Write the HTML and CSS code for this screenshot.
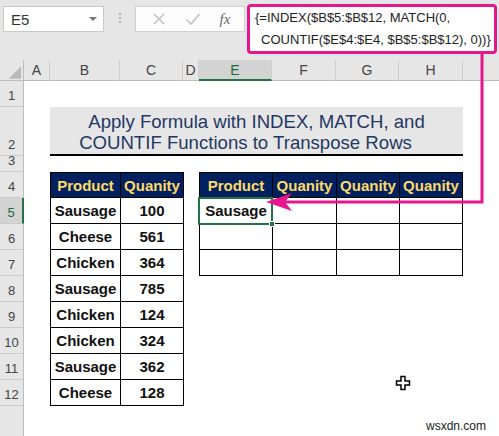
FILE: index.html
```html
<!DOCTYPE html>
<html>
<head>
<meta charset="utf-8">
<link rel="stylesheet" href="styles.css">
</head>
<body>
<div class="app">
  <div class="toolbar">
    <div class="namebox"><span>E5</span><span class="caret"></span></div>
    <div class="grip"><i></i><i></i><i></i></div>
    <div class="fxbox">
      <svg width="14" height="14" viewBox="0 0 14 14"><path d="M2 2 L12 12 M12 2 L2 12" stroke="#c4c4c4" stroke-width="1.6" fill="none"/></svg>
      <svg width="16" height="14" viewBox="0 0 16 14"><path d="M1.5 7.5 L6 12 L14.5 2" stroke="#c4c4c4" stroke-width="1.6" fill="none"/></svg>
      <span class="fx">fx</span>
    </div>
    <div class="formula">
      <div>{=INDEX($B$5:$B$12, MATCH(0,</div>
      <div class="l2">COUNTIF($E$4:$E4, $B$5:$B$12), 0))}</div>
    </div>
  </div>

  <div class="sheet">
    <div class="ch corner"><svg width="24" height="21" viewBox="0 0 24 21"><polygon points="22,6 22,19 9,19" fill="#b9b9b9"/></svg></div>
    <div class="ch">A</div>
    <div class="ch">B</div>
    <div class="ch">C</div>
    <div class="ch">D</div>
    <div class="ch on">E</div>
    <div class="ch">F</div>
    <div class="ch">G</div>
    <div class="ch">H</div>
    <div class="ch last"></div>

    <div class="rh">1</div>
    <div class="rh">2</div>
    <div class="rh">3</div>
    <div class="rh">4</div>
    <div class="rh on">5</div>
    <div class="rh">6</div>
    <div class="rh">7</div>
    <div class="rh">8</div>
    <div class="rh">9</div>
    <div class="rh">10</div>
    <div class="rh">11</div>
    <div class="rh">12</div>
    <div class="rh rest"></div>

    <div class="title"><span class="ln">Apply Formula with INDEX, MATCH, and</span><span class="ln ln2">COUNTIF Functions to Transpose Rows</span></div>

    <div class="tbl t1">
      <div class="c hd">Product</div><div class="c hd">Quanity</div>
      <div class="c">Sausage</div><div class="c">100</div>
      <div class="c">Cheese</div><div class="c">561</div>
      <div class="c">Chicken</div><div class="c">364</div>
      <div class="c">Sausage</div><div class="c">785</div>
      <div class="c">Chicken</div><div class="c">124</div>
      <div class="c">Chicken</div><div class="c">324</div>
      <div class="c">Sausage</div><div class="c">362</div>
      <div class="c">Cheese</div><div class="c">128</div>
    </div>

    <div class="tbl t2">
      <div class="c hd">Product</div><div class="c hd">Quanity</div><div class="c hd">Quanity</div><div class="c hd">Quanity</div>
      <div class="c">Sausage</div><div class="c"></div><div class="c"></div><div class="c"></div>
      <div class="c"></div><div class="c"></div><div class="c"></div><div class="c"></div>
      <div class="c"></div><div class="c"></div><div class="c"></div><div class="c"></div>
    </div>

    <div class="sel"><span class="handle"></span></div>
  </div>

  <svg class="arrow" width="499" height="436" viewBox="0 0 499 436">
    <path d="M482 53 V202 H284" stroke="#e8168c" stroke-width="3" fill="none"/>
    <polygon points="266,202 292,193 285,202 292,211" fill="#e8168c"/>
  </svg>

  <svg class="cursor" width="17" height="17" viewBox="0 0 17 17">
    <path d="M6 1.5 H10 V6 H14.5 V10 H10 V14.5 H6 V10 H1.5 V6 H6 Z" fill="#fff" stroke="#000" stroke-width="1.5"/>
  </svg>

  <div class="wm">wsxdn.com</div>
</div>
</body>
</html>
```

FILE: styles.css
```css
* { box-sizing: border-box; margin: 0; padding: 0; }
html, body { margin: 0; background: #fff; }
body { font-family: "Liberation Sans", Arial, sans-serif; width: 499px; height: 436px; overflow: hidden; }

.app { position: relative; width: 499px; height: 436px; }

.toolbar { height: 60px; background: #e6e6e6; display: flex; align-items: flex-start; padding-left: 3px; }
.namebox { margin-top: 6px; width: 101px; height: 26px; background: #fff; border: 1px solid #c9c9c9; display: flex; align-items: center; justify-content: space-between; padding: 0 6px 0 7px; font-size: 15px; color: #333; }
.caret { width: 0; height: 0; border-left: 4px solid transparent; border-right: 4px solid transparent; border-top: 4px solid #777; }
.grip { margin-top: 13px; width: 31px; display: flex; flex-direction: column; align-items: center; gap: 2px; }
.grip i { display: block; width: 2px; height: 2px; background: #b3b3b3; }
.fxbox { margin-top: 6px; width: 110px; height: 26px; background: #fdfdfd; border: 1px solid #d0d0d0; display: flex; align-items: center; justify-content: space-around; padding: 0 4px 0 6px; }
.fx { font-family: "Liberation Serif", serif; font-style: italic; font-size: 15px; color: #666; }
.formula { margin-top: 4px; margin-left: 2px; width: 250px; height: 50px; border: 3px solid #e8168c; border-radius: 4px; background: #fff; padding: 0 0 0 5px; font-size: 13px; line-height: 22px; color: #222; }
.formula .l2 { padding-left: 6px; }

.sheet { display: grid; grid-template-columns: 24px 26px 70px 63px 16px 73px 64px 63px 64px 1fr; grid-template-rows: 21px 26px 49px 16px repeat(9, 26px) 1fr; height: 376px; }

.ch { background: #e6e6e6; border-bottom: 1px solid #bcbcbc; border-right: 1px solid #cfcfcf; display: flex; align-items: center; justify-content: center; font-size: 14px; color: #444; }
.ch.corner { border-right: 1px solid #bcbcbc; }
.ch.last { border-right: none; }
.ch.on { background: #d3d3d3; color: #1d6b40; border-bottom: 2px solid #217346; }

.rh { grid-column: 1; background: #e6e6e6; border-right: 1px solid #bcbcbc; border-bottom: 1px solid #cbcbcb; display: flex; align-items: flex-end; justify-content: center; font-size: 13px; color: #444; padding-bottom: 3px; }
.rh.on { background: #d3d3d3; color: #1d6b40; border-right: 2px solid #217346; }
.rh.rest { border-bottom: none; }

.title { grid-column: 3 / 10; grid-row: 3; background: #e7e6e6; border-bottom: 2px solid #000; display: flex; flex-direction: column; justify-content: flex-end; align-items: center; font-size: 18.6px; line-height: 21px; color: #1f3864; padding-bottom: 1px; }
.title .ln { display: block; white-space: nowrap; }
.title .ln2 { margin-right: 22px; }

.tbl { display: grid; border-left: 1px solid #000; border-top: 1px solid #000; }
.t1 { grid-column: 3 / 5; grid-row: 5 / 14; grid-template-columns: 70px 1fr; grid-template-rows: 25px repeat(8, 26px); margin-right: -1px; }
.t2 { grid-column: 6 / 10; grid-row: 5 / 9; grid-template-columns: 73px 64px 63px 1fr; grid-template-rows: 25px 26px 26px 1fr; }
.c { border-right: 1px solid #000; border-bottom: 1px solid #000; display: flex; align-items: center; justify-content: center; font-size: 15px; font-weight: bold; color: #111; background: #fff; }
.c.hd { background: #002060; color: #ffd966; }

.sel { grid-column: 6; grid-row: 6; margin: -1px -1px -1px -1px; border: 2px solid #217346; position: relative; z-index: 2; }
.handle { position: absolute; right: -4px; bottom: -4px; width: 6px; height: 6px; background: #217346; border: 1px solid #fff; }

.arrow { position: absolute; left: 0; top: 0; pointer-events: none; z-index: 5; }
.cursor { position: absolute; left: 395px; top: 375px; }
.wm { position: absolute; left: 426px; top: 419px; font-size: 12px; color: #222; }
```
